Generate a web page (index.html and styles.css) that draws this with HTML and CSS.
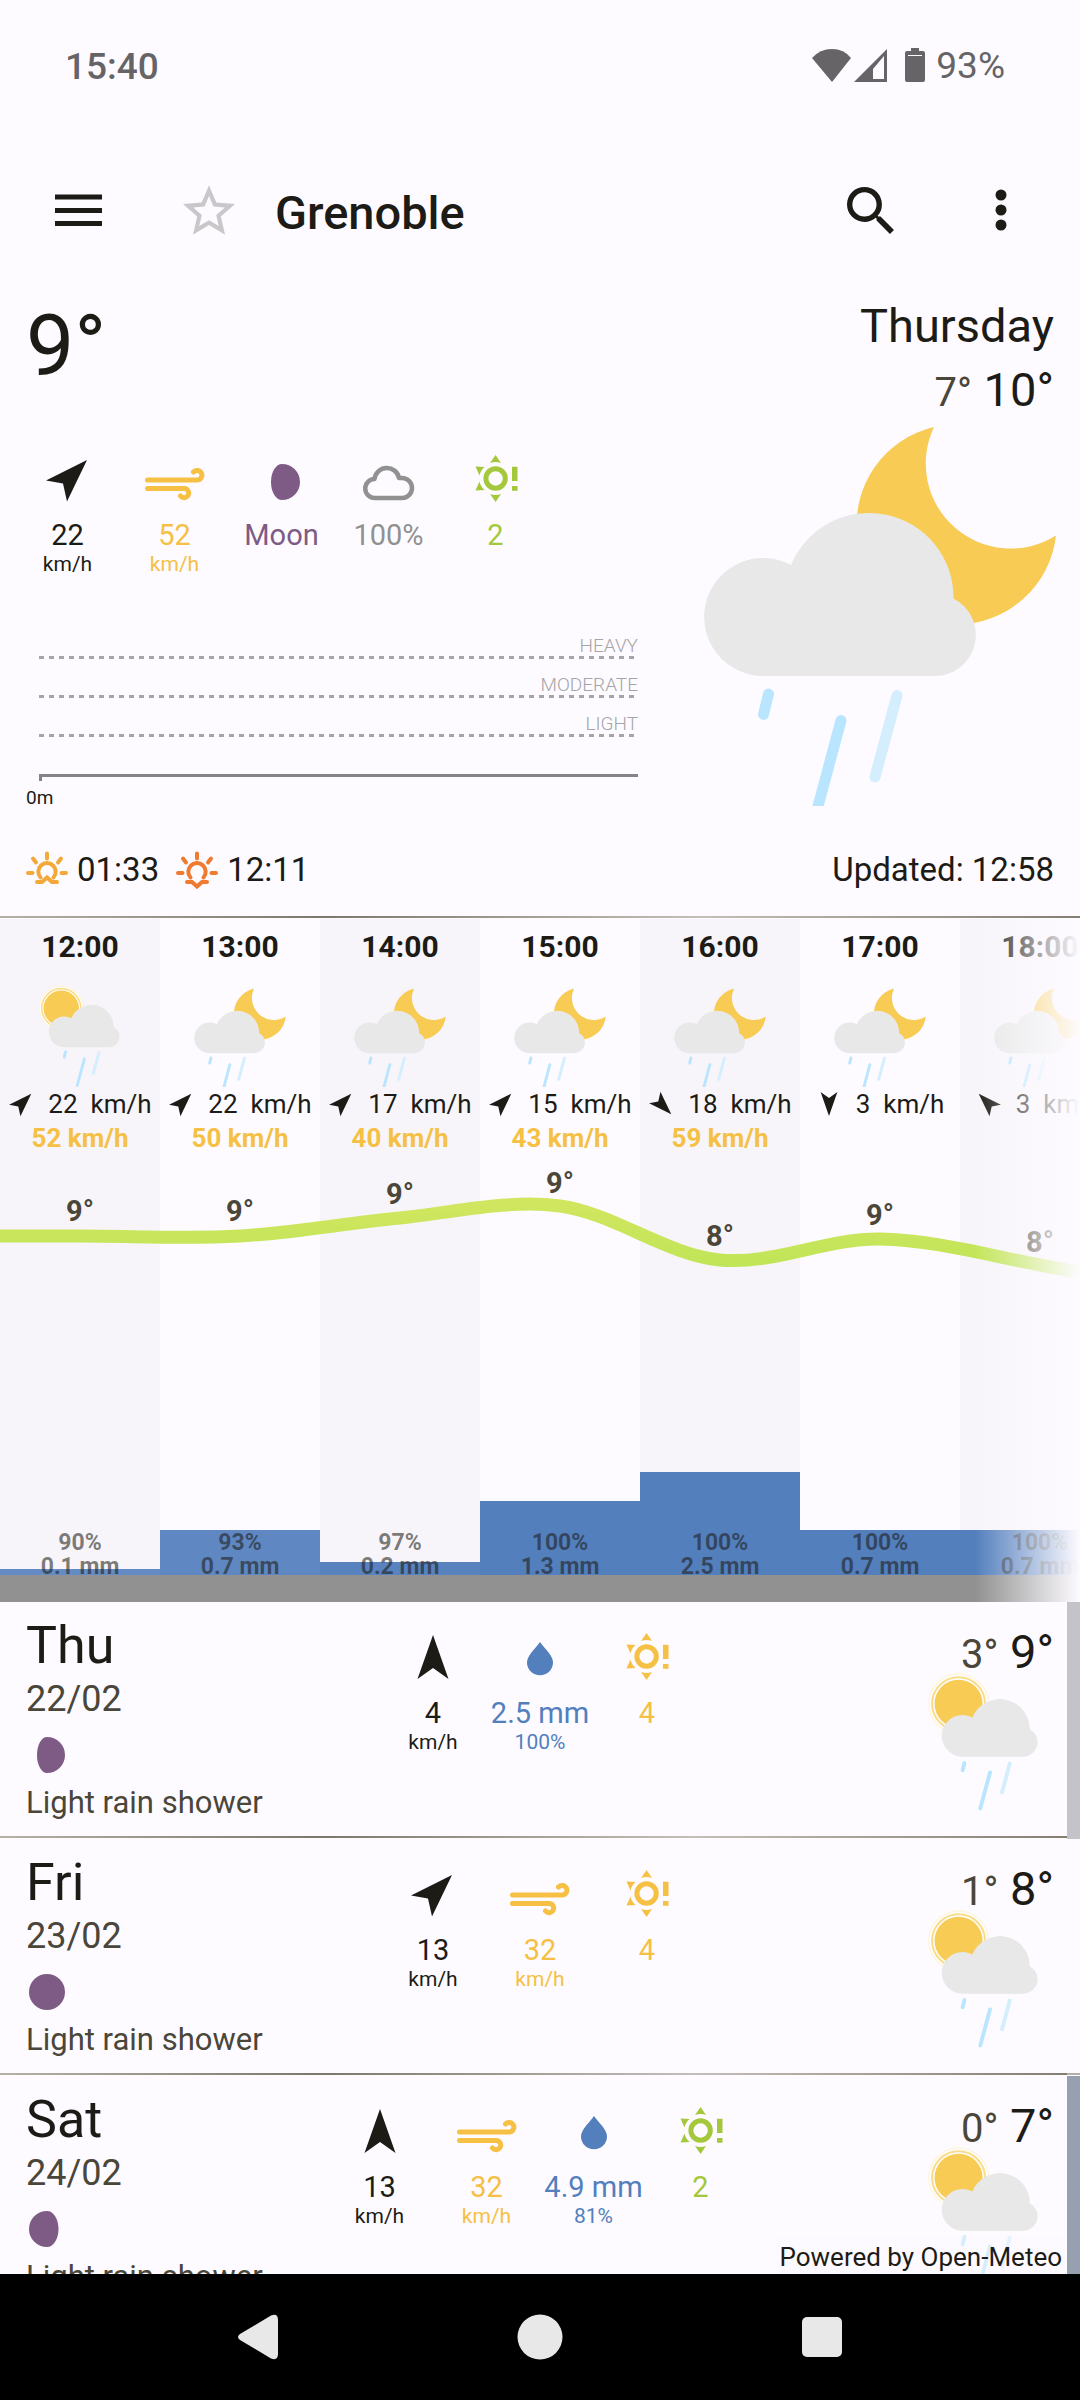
FILE: index.html
```html
<!DOCTYPE html>
<html lang="en">
<head>
<meta charset="utf-8">
<meta name="viewport" content="width=device-width, initial-scale=1">
<title>Grenoble weather</title>
<link rel="stylesheet" href="styles.css">
</head>
<body>
<svg class="defs" aria-hidden="true">
  <defs>
    <g id="cloud-rain">
      <g stroke="#b9e6fe" stroke-width="11" stroke-linecap="round">
        <path d="M768.500 694L763.500 714.500M841 720.500L813.500 823"/>
        <path stroke="#d4eefe" d="M897 695.500L875 777"/>
      </g>
      <path fill="#e8e8e8" d="M764 676A59 59 0 1 1 791 565A84.500 84.500 0 0 1 953.500 598.500A41 41 0 0 1 935 676Z"/>
    </g>
    <g id="night-rain">
      <path fill="#f7cb54" d="M934 427A85 85 0 0 0 1056 535.500A100 100 0 1 1 934 427Z"/>
      <use href="#cloud-rain"/>
    </g>
    <g id="day-rain">
      <circle cx="752" cy="526" r="86" fill="#fdf5dc"/>
      <circle cx="752" cy="526" r="82" fill="#fff"/>
      <circle cx="752" cy="526" r="75" fill="#fff" stroke="#f9dc8c" stroke-width="6"/>
      <circle cx="752" cy="526" r="68" fill="#f7cb54"/>
      <use href="#cloud-rain"/>
    </g>
    <symbol id="arrow-n" viewBox="0 0 48 48"><path d="M24 2L39.500 46L24 35L8.500 46Z"/></symbol>
    <symbol id="arrow-ne" viewBox="0 0 48 48"><path d="M43 5L23 46.500L19 28.500L2 25.500Z"/></symbol>
    <symbol id="arrow-se" viewBox="0 0 48 48"><path d="M43 43L2 22.500L19 19.500L23 1.500Z"/></symbol>
    <symbol id="arrow-s" viewBox="0 0 48 48"><path d="M24 46L8.500 2L24 13L39.500 2Z"/></symbol>
    <symbol id="arrow-nw" viewBox="0 0 48 48"><path d="M5 5L25 46.500L29 28.500L46 25.500Z"/></symbol>
    <symbol id="wind" viewBox="0 0 60 48"><path fill="none" stroke="currentColor" stroke-width="5" stroke-linecap="round" d="M2.500 25H52a4.800 4.800 0 1 0-3.500-8M2.500 33.500H39a4.600 4.600 0 1 1-3.500 7.500"/></symbol>
    <symbol id="uv" viewBox="0 0 48 48">
      <circle cx="23.600" cy="23.500" r="9.700" fill="none" stroke="currentColor" stroke-width="5"/>
      <path d="M23.600 0L29 8Q23.600 6 18 8ZM23.600 47L29 39Q23.600 41 18 39ZM3.500 11.500L12.600 12Q8.500 15.500 7.500 20.500ZM3.500 35.500L12.600 35Q8.500 31.500 7.500 26.500ZM40 11.700H45.500V26H40ZM40 31H45.500V35.700H40Z"/>
    </symbol>
    <symbol id="drop" viewBox="0 0 48 48"><path d="M24 9C18 17 11 23 11 29.500a13 12.800 0 0 0 26 0C37 23 30 17 24 9Z"/></symbol>
    <symbol id="cloud" viewBox="0 0 53 48"><path fill="none" stroke="currentColor" stroke-width="4.500" stroke-linejoin="round" d="M13 43H40a10 10 0 0 0 0-20h-3A12.400 12.400 0 0 0 12.500 24A9.500 9.500 0 0 0 13 43Z"/></symbol>
    <symbol id="rays" viewBox="0 0 42 38"><path d="M21 2.500V7.500M2 22H6.500M35.500 22H40M7 7.500L10 11.500M35 7.500L32 11.500M14.500 26.500A8.700 8.700 0 1 1 27.500 26.500"/></symbol>
  </defs>
</svg>

<div class="screen">
  <div class="status">
    <span class="clock">15:40</span>
    <div class="status-right">
      <svg width="76" height="36" viewBox="0 0 76 36" aria-hidden="true">
        <path fill="currentColor" d="M20 35L0 11Q8 2 20 2T39 11Z"/>
        <path fill="currentColor" fill-rule="evenodd" d="M75 2V35H42ZM72 9V32H61V22Z"/>
      </svg>
      <svg width="20" height="36" viewBox="0 0 20 36" aria-hidden="true"><path fill="currentColor" d="M6 1H14V4H18Q20 4 20 6V33Q20 35 18 35H2Q0 35 0 33V6Q0 4 2 4H6Z"/><path stroke="#fdfbff" d="M3 8.500H17"/></svg>
      <span>93%</span>
    </div>
  </div>

  <header class="appbar">
    <button class="icon-btn" aria-label="Menu"><svg width="48" height="48" viewBox="0 0 48 48"><path stroke="currentColor" stroke-width="5" d="M0 11H47M0 24.500H47M0 37.500H47"/></svg></button>
    <button class="icon-btn star" aria-label="Add to favourites"><svg width="52" height="52" viewBox="0 0 24 24"><path fill="currentColor" d="M22 9.740l-7.190-.62L12 2.500 9.190 9.130 2 9.740l5.460 4.730-1.640 7.030L12 17.770l6.180 3.730-1.630-7.030zM12 15.900l-3.760 2.270 1-4.280-3.320-2.880 4.380-.38L12 6.600l1.710 4.040 4.380.38-3.320 2.880 1 4.280z" transform="translate(-2.400 -2.400) scale(1.200)"/></svg></button>
    <h1>Grenoble</h1>
    <button class="icon-btn search" aria-label="Search"><svg width="47" height="47" viewBox="0 0 17.500 17.500"><path fill="currentColor" d="M12.500 11h-.79l-.28-.27A6.470 6.470 0 0 0 13 6.500 6.500 6.500 0 1 0 6.500 13c1.610 0 3.090-.59 4.230-1.570l.27.28v.79l5 4.990L17.490 16zm-6 0a4.500 4.500 0 1 1 0-9 4.500 4.500 0 0 1 0 9z"/></svg></button>
    <button class="icon-btn" aria-label="More options"><svg width="12" height="42" viewBox="0 0 12 42"><g fill="currentColor"><circle cx="6" cy="6" r="5.500"/><circle cx="6" cy="21" r="5.500"/><circle cx="6" cy="36" r="5.500"/></g></svg></button>
  </header>

  <main>
    <section class="current">
      <div class="now">
        <div class="now-temp">9°</div>
        <ul class="stats">
          <li><svg width="48" height="48"><use href="#arrow-ne"/></svg><b>22</b><small>km/h</small></li>
          <li class="yellow"><svg width="60" height="48"><use href="#wind"/></svg><b>52</b><small>km/h</small></li>
          <li class="purple"><svg width="36" height="48" viewBox="0 -9 36 48"><path d="M18 0A18 18 0 0 1 18 36A11 18 0 0 1 18 0Z"/></svg><b>Moon</b></li>
          <li class="grey"><svg width="53" height="48"><use href="#cloud"/></svg><b>100%</b></li>
          <li class="green"><svg width="48" height="48"><use href="#uv"/></svg><b>2</b></li>
        </ul>
        <div class="levels">
          <div class="level">HEAVY</div>
          <div class="level">MODERATE</div>
          <div class="level">LIGHT</div>
          <div class="axis"></div>
          <div class="axis-label">0m</div>
        </div>
      </div>
      <div class="today">
        <h2>Thursday</h2>
        <p class="range"><span>7°</span> 10°</p>
        <svg width="368" height="388" viewBox="696 418 368 388" role="img" aria-label="Rain shower at night"><use href="#night-rain"/></svg>
      </div>
      <div class="sun">
        <span><svg class="rise" width="42" height="38"><use href="#rays"/><path d="M11 31H16L21 26.500L26 31H31"/></svg>01:33</span>
        <span><svg class="set" width="42" height="38"><use href="#rays"/><path d="M11 31H16L21 35.500L26 31H31"/></svg>12:11</span>
        <span class="updated">Updated: 12:58</span>
      </div>
    </section>

    <section class="hourly" aria-label="Hourly forecast">
      <div class="track">
        <article class="hour">
          <h3>12:00</h3>
          <svg width="96" height="102" viewBox="640 437 368 392"><use href="#day-rain"/></svg>
          <p class="wind"><svg width="26" height="26"><use href="#arrow-ne"/></svg><span>22</span><span>km/h</span></p>
          <p class="gust">52 km/h</p>
          <div class="bar" style="height:6px;opacity:.9"></div>
          <p class="precip">90%<br>0.1 mm</p>
        </article>
        <article class="hour">
          <h3>13:00</h3>
          <svg width="96" height="102" viewBox="696 414 368 392"><use href="#night-rain"/></svg>
          <p class="wind"><svg width="26" height="26"><use href="#arrow-ne"/></svg><span>22</span><span>km/h</span></p>
          <p class="gust">50 km/h</p>
          <div class="bar" style="height:45px;opacity:.93"></div>
          <p class="precip">93%<br>0.7 mm</p>
        </article>
        <article class="hour">
          <h3>14:00</h3>
          <svg width="96" height="102" viewBox="696 414 368 392"><use href="#night-rain"/></svg>
          <p class="wind"><svg width="26" height="26"><use href="#arrow-ne"/></svg><span>17</span><span>km/h</span></p>
          <p class="gust">40 km/h</p>
          <div class="bar" style="height:13px;opacity:.97"></div>
          <p class="precip">97%<br>0.2 mm</p>
        </article>
        <article class="hour">
          <h3>15:00</h3>
          <svg width="96" height="102" viewBox="696 414 368 392"><use href="#night-rain"/></svg>
          <p class="wind"><svg width="26" height="26"><use href="#arrow-ne"/></svg><span>15</span><span>km/h</span></p>
          <p class="gust">43 km/h</p>
          <div class="bar" style="height:74px"></div>
          <p class="precip">100%<br>1.3 mm</p>
        </article>
        <article class="hour">
          <h3>16:00</h3>
          <svg width="96" height="102" viewBox="696 414 368 392"><use href="#night-rain"/></svg>
          <p class="wind"><svg width="26" height="26"><use href="#arrow-se"/></svg><span>18</span><span>km/h</span></p>
          <p class="gust">59 km/h</p>
          <div class="bar" style="height:103px"></div>
          <p class="precip">100%<br>2.5 mm</p>
        </article>
        <article class="hour">
          <h3>17:00</h3>
          <svg width="96" height="102" viewBox="696 414 368 392"><use href="#night-rain"/></svg>
          <p class="wind"><svg width="26" height="26"><use href="#arrow-s"/></svg><span>3</span><span>km/h</span></p>
          <div class="bar" style="height:45px"></div>
          <p class="precip">100%<br>0.7 mm</p>
        </article>
        <article class="hour">
          <h3>18:00</h3>
          <svg width="96" height="102" viewBox="696 414 368 392"><use href="#night-rain"/></svg>
          <p class="wind"><svg width="26" height="26"><use href="#arrow-nw"/></svg><span>3</span><span>km/h</span></p>
          <div class="bar" style="height:45px"></div>
          <p class="precip">100%<br>0.7 mm</p>
        </article>
        <svg class="curve" width="1120" height="150" viewBox="0 1150 1120 150">
          <defs><linearGradient id="heat" gradientUnits="userSpaceOnUse" x1="0" x2="0" y1="1200" y2="1268"><stop offset="0" stop-color="#d2e660"/><stop offset="1" stop-color="#c0e557"/></linearGradient></defs>
          <path fill="none" stroke="url(#heat)" stroke-width="13" d="M0 1237H80C133 1237 187 1240 240 1237C293 1234 347 1224 400 1219C453 1214 507 1200 560 1207C613 1214 667 1256 720 1261C773 1266 827 1239 880 1240C933 1241 987 1256 1040 1266C1093 1276 1110 1278 1120 1279"/>
          <g text-anchor="middle">
            <text x="80" y="1222">9°</text><text x="240" y="1222">9°</text><text x="400" y="1205">9°</text><text x="560" y="1194">9°</text><text x="720" y="1247">8°</text><text x="880" y="1226">9°</text><text x="1040" y="1253">8°</text>
          </g>
        </svg>
      </div>
    </section>

    <section class="daily" aria-label="Daily forecast">
      <article class="day warn-low">
        <div class="date">
          <h3>Thu</h3>
          <p>22/02</p>
          <svg class="purple" width="36" height="36"><path d="M18 0A18 18 0 0 1 18 36A10 18 0 0 1 18 0Z"/></svg>
          <p class="summary">Light rain shower</p>
        </div>
        <ul class="stats">
          <li><svg width="48" height="48"><use href="#arrow-n"/></svg><b>4</b><small>km/h</small></li>
          <li class="blue"><svg width="48" height="48"><use href="#drop"/></svg><b>2.5 mm</b><small>100%</small></li>
          <li class="yellow"><svg width="48" height="48"><use href="#uv"/></svg><b>4</b></li>
        </ul>
        <div class="outlook">
          <p class="range"><span>3°</span> 9°</p>
          <svg width="130" height="139" viewBox="640 437 368 392"><use href="#day-rain"/></svg>
        </div>
      </article>
      <article class="day">
        <div class="date">
          <h3>Fri</h3>
          <p>23/02</p>
          <svg class="purple" width="36" height="36"><circle cx="18" cy="18" r="18"/></svg>
          <p class="summary">Light rain shower</p>
        </div>
        <ul class="stats">
          <li><svg width="48" height="48"><use href="#arrow-ne"/></svg><b>13</b><small>km/h</small></li>
          <li class="yellow"><svg width="60" height="48"><use href="#wind"/></svg><b>32</b><small>km/h</small></li>
          <li class="yellow"><svg width="48" height="48"><use href="#uv"/></svg><b>4</b></li>
        </ul>
        <div class="outlook">
          <p class="range"><span>1°</span> 8°</p>
          <svg width="130" height="139" viewBox="640 437 368 392"><use href="#day-rain"/></svg>
        </div>
      </article>
      <article class="day warn-high">
        <div class="date">
          <h3>Sat</h3>
          <p>24/02</p>
          <svg class="purple" width="36" height="36"><path d="M18 0A18 18 0 0 0 18 36A11.500 18 0 0 0 18 0Z"/></svg>
          <p class="summary">Light rain shower</p>
        </div>
        <ul class="stats">
          <li><svg width="48" height="48"><use href="#arrow-n"/></svg><b>13</b><small>km/h</small></li>
          <li class="yellow"><svg width="60" height="48"><use href="#wind"/></svg><b>32</b><small>km/h</small></li>
          <li class="blue"><svg width="48" height="48"><use href="#drop"/></svg><b>4.9 mm</b><small>81%</small></li>
          <li class="green"><svg width="48" height="48"><use href="#uv"/></svg><b>2</b></li>
        </ul>
        <div class="outlook">
          <p class="range"><span>0°</span> 7°</p>
          <svg width="130" height="139" viewBox="640 437 368 392"><use href="#day-rain"/></svg>
        </div>
      </article>
      <a class="credit" href="#">Powered by Open-Meteo</a>
    </section>
  </main>

  <nav class="system">
    <button aria-label="Back"><svg width="42" height="46" viewBox="0 0 42 46"><path fill="currentColor" d="M3 20L34 1.500Q41 -1 41 6V40Q41 47 34 44.500L3 26Q-1 23 3 20Z"/></svg></button>
    <button aria-label="Home"><svg width="46" height="46"><circle cx="23" cy="23" r="22.500" fill="currentColor"/></svg></button>
    <button aria-label="Recent apps"><svg width="40" height="40"><rect width="40" height="40" rx="5" fill="currentColor"/></svg></button>
  </nav>
</div>
</body>
</html>
```
FILE: styles.css
```css
:root {
  --bg: #fdfbff;
  --ink: #1d1b16;
  --muted: #4a4639;
  --yellow: #f5c044;
  --green: #a5c73c;
  --purple: #7e5b85;
  --blue: #537fbd;
  --grey: #919191;
  --line: linear-gradient(90deg, #b5b0a8, #7c776c 30%, #c3beb8 65%, #857d70);
}

* { box-sizing: border-box; }

body, h1, h2, h3, p, ul { margin: 0; padding: 0; }

body {
  background: var(--bg);
  color: var(--ink);
  font-family: Roboto, sans-serif;
  font-size: 29px;
}

svg { display: block; fill: currentColor; flex: none; }
.defs { position: absolute; width: 0; height: 0; }

button {
  display: grid;
  place-items: center;
  padding: 0;
  border: 0;
  background: none;
  color: inherit;
}

.yellow { color: var(--yellow); }
.green { color: var(--green); }
.purple { color: var(--purple); }
.blue { color: var(--blue); }
.grey { color: var(--grey); }

.screen {
  display: flex;
  flex-direction: column;
  height: 100vh;
  overflow: hidden;
}

/* Status bar */
.status {
  display: flex;
  justify-content: space-between;
  align-items: center;
  height: 126px;
  padding: 4px 75px 0 65px;
  color: #666466;
  font-size: 37px;
}
.clock { padding-top: 2px; font-weight: 500; }
.status-right { display: flex; align-items: center; gap: 11px; }
.status-right svg:first-child { margin-right: 6px; }

/* App bar */
.appbar {
  display: flex;
  align-items: center;
  height: 168px;
  padding: 0 42px;
}
.icon-btn { width: 74px; height: 84px; }
.star { margin-left: 56px; color: #c9c7c9; }
.appbar h1 { margin-left: 29px; padding-top: 4px; font-size: 47px; font-weight: 500; }
.search { margin-left: auto; margin-right: 57px; }

main {
  display: flex;
  flex: 1;
  flex-direction: column;
  min-height: 0;
}

/* Current weather */
.current {
  display: grid;
  grid-template-columns: 1fr 368px;
  column-gap: 58px;
  padding: 3px 16px 30px 26px;
  background: var(--line) bottom 1px left / 100% 2px no-repeat;
}
.now-temp { font-size: 86px; line-height: 98px; }

.stats { display: flex; list-style: none; }
.stats li {
  display: flex;
  flex-direction: column;
  align-items: center;
  width: 107px;
}
.stats b { margin-top: 15px; font-weight: 400; line-height: 34px; }
.stats small { font-size: 21px; line-height: 24px; }
.now .stats { margin: 60px 0 0 -12px; height: 121px; }

.levels { margin-top: 44px; }
.level {
  height: 39px;
  padding-top: 16px;
  color: #a6a4a6;
  background: repeating-linear-gradient(90deg, #a6a4a6 0 5px, transparent 5px 10px) 13px 100% / calc(100% - 17px) 3px no-repeat;
  font-size: 19px;
  font-weight: 300;
  line-height: 20px;
  text-align: right;
}
.axis {
  height: 7px;
  margin: 37px 0 0 13px;
  border-top: 3px solid #858385;
  background: linear-gradient(#858385, #858385) left / 3px 100% no-repeat;
}
.axis-label { margin-top: 6px; font-size: 19px; line-height: 22px; }

.today h2 {
  margin-top: 1px;
  padding-right: 10px;
  font-size: 47px;
  font-weight: 400;
  line-height: 56px;
  text-align: right;
}
.range { font-size: 47px; text-align: right; }
.range span { color: var(--muted); font-size: 40px; line-height: 0; }
.today .range { margin-top: 8px; padding-right: 10px; line-height: 56px; }

.sun {
  display: flex;
  grid-column: 1 / -1;
  gap: 17px;
  margin-top: 42px;
  padding-right: 10px;
  font-size: 33px;
  line-height: 38px;
}
.sun span { display: flex; gap: 9px; }
.sun svg { fill: none; stroke: currentColor; stroke-width: 4; stroke-linecap: round; }
.sun .updated { margin-left: auto; }
.rise { color: #f3a939; }
.set { color: #ef7b31; }

/* Hourly strip */
.hourly {
  position: relative;
  flex: none;
  overflow: hidden;
}
.hourly::after {
  content: "";
  position: absolute;
  inset: 0 0 0 auto;
  width: 105px;
  background: linear-gradient(90deg, transparent, var(--bg));
}
.track {
  position: relative;
  display: flex;
  width: max-content;
  border-bottom: 27px solid var(--grey);
}
.hour {
  position: relative;
  display: flex;
  flex-direction: column;
  align-items: center;
  width: 160px;
  height: 656px;
  padding-top: 10px;
}
.hour:nth-child(odd) { background: #f7f5f9; }
.hour h3 { margin-bottom: 20px; font-size: 30px; line-height: 36px; }
.wind {
  display: flex;
  align-items: center;
  margin-top: 2px;
  font-size: 26px;
  line-height: 30px;
}
.wind svg { margin-right: 14px; }
.wind span + span { margin-left: 13px; }
.gust {
  margin-top: 4px;
  color: var(--yellow);
  font-size: 26px;
  font-weight: 700;
  line-height: 30px;
}
.bar {
  position: absolute;
  inset: auto 0 0;
  background: var(--blue);
}
.precip {
  position: relative;
  margin: auto 0 -4px;
  color: rgb(29 27 22 / .58);
  font-size: 23px;
  font-weight: 700;
  line-height: 24px;
  text-align: center;
}
.curve { position: absolute; top: 230px; left: 0; }
.curve text { fill: var(--muted); font-size: 29px; font-weight: 700; }

/* Daily list */
.daily {
  position: relative;
  flex: 1;
  min-height: 0;
  overflow: hidden;
}
.day {
  display: grid;
  grid-template-columns: 1fr auto 1fr;
  padding: 14px 13px 19px 26px;
  border-right: 13px solid transparent;
  background: var(--line) bottom 1px left / 100% 2px repeat-x;
}
.warn-low { border-right-color: #c4c3c9; }
.warn-high { border-right-color: #97a0af; }
.date { color: var(--muted); font-size: 36px; line-height: 42px; }
.date h3 {
  margin-bottom: 2px;
  color: var(--ink);
  font-size: 52px;
  font-weight: 400;
  line-height: 60px;
}
.date svg { margin: 17px 3px 13px; }
.date .summary { font-size: 31px; line-height: 34px; }
.day .stats { margin-top: 17px; }
.outlook { margin-top: 16px; }
.outlook .range { line-height: 40px; }
.outlook svg { margin: 0 5px 0 auto; }
.credit {
  position: absolute;
  right: 13px;
  bottom: 0;
  padding: 6px 5px 2px;
  background: rgb(253 251 255 / .4);
  color: var(--ink);
  font-size: 26px;
  line-height: 30px;
  text-decoration: none;
}

/* System navigation */
.system {
  display: grid;
  flex: none;
  grid-template-columns: repeat(3, 282px);
  justify-content: center;
  height: 126px;
  background: #000;
  color: #e8e8e8;
}
```
